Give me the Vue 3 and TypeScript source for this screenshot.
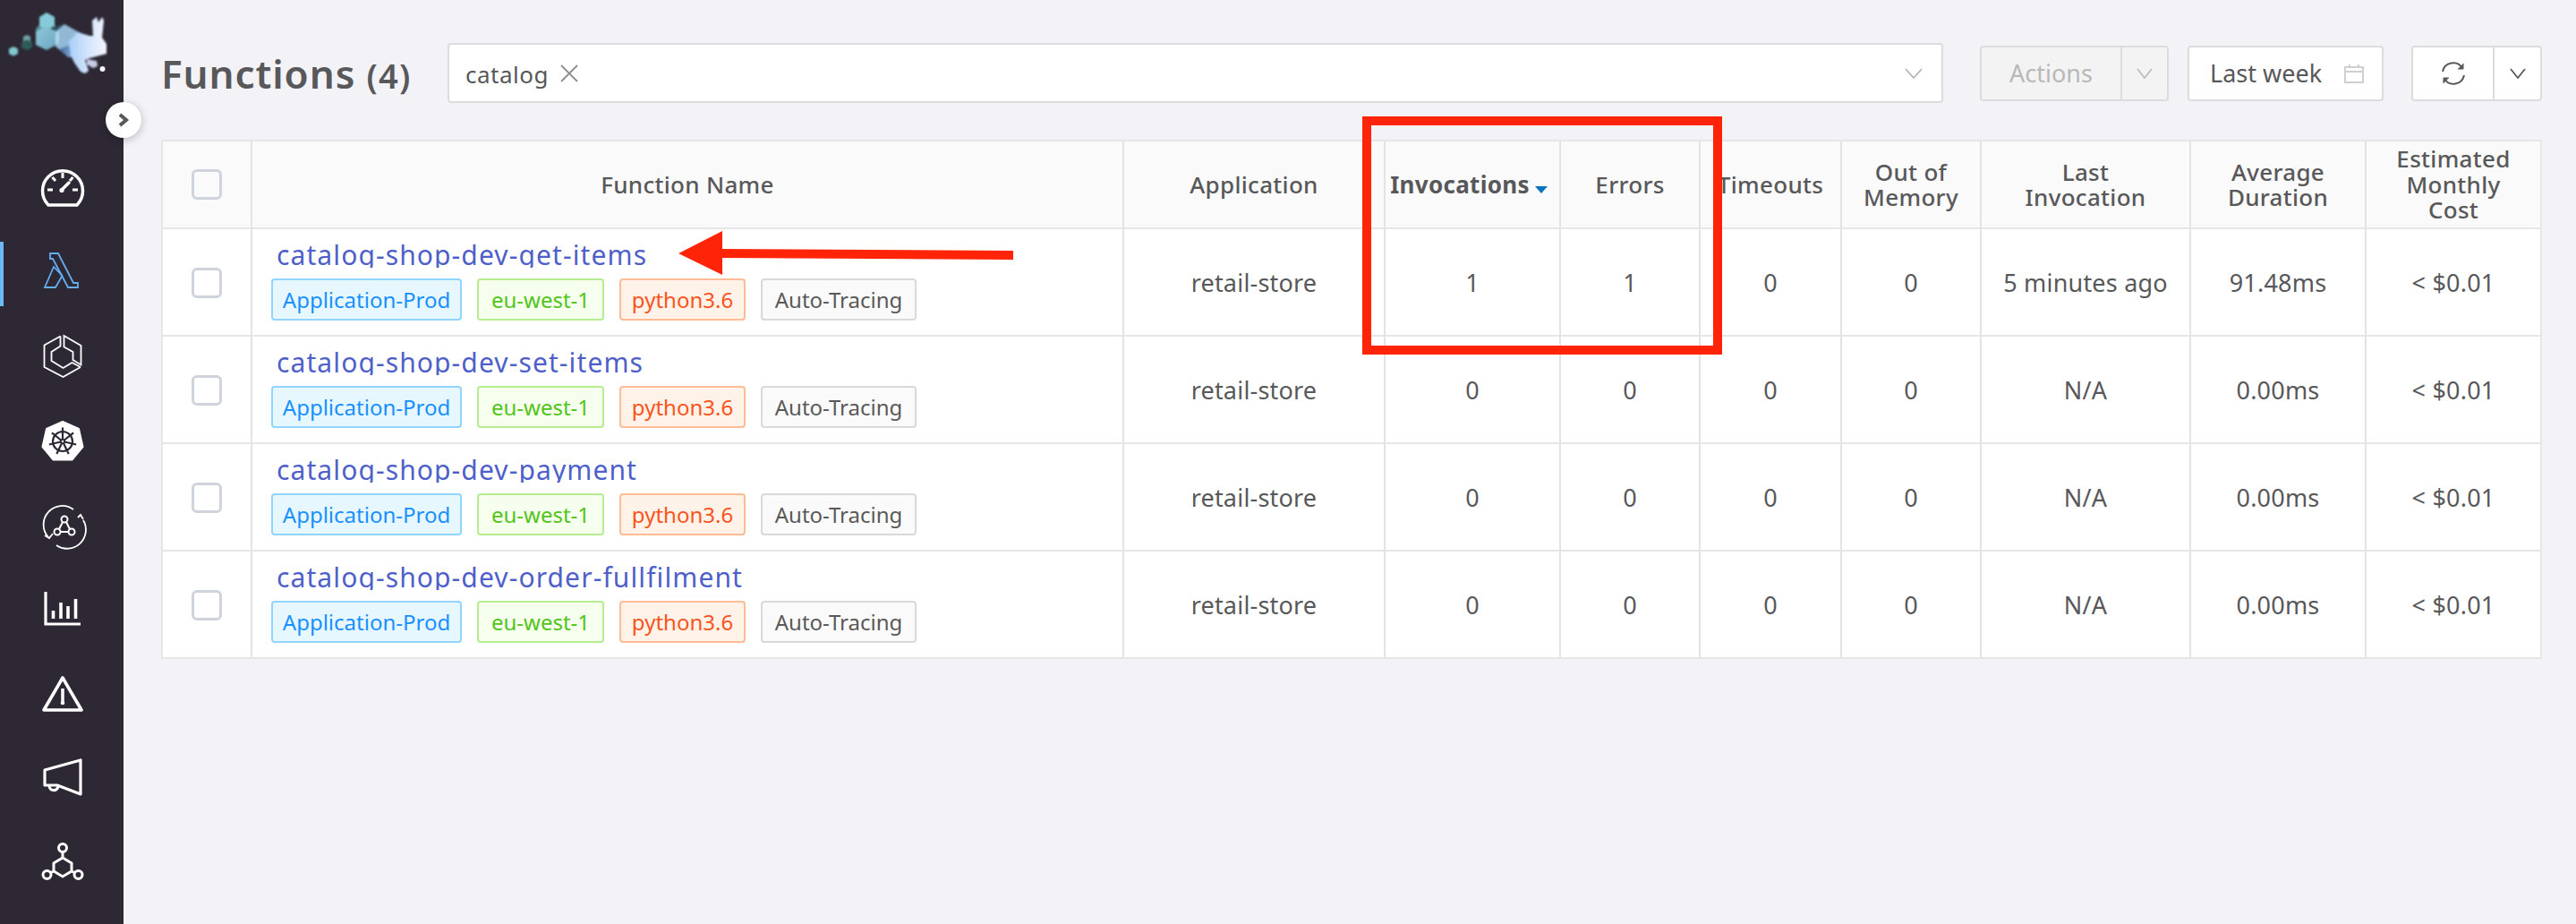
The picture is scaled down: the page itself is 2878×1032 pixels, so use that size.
<script setup lang="ts">
interface FunctionRow {
  name: string;
  invocations: number;
  errors: number;
  last: string;
  duration: string;
}

const columns: { lines: string[]; sorted?: boolean }[] = [
  { lines: ["Function Name"] },
  { lines: ["Application"] },
  { lines: ["Invocations"], sorted: true },
  { lines: ["Errors"] },
  { lines: ["Timeouts"] },
  { lines: ["Out of", "Memory"] },
  { lines: ["Last", "Invocation"] },
  { lines: ["Average", "Duration"] },
  { lines: ["Estimated", "Monthly", "Cost"] },
];

const rows: FunctionRow[] = [
  { name: "catalog-shop-dev-get-items", invocations: 1, errors: 1, last: "5 minutes ago", duration: "91.48ms" },
  { name: "catalog-shop-dev-set-items", invocations: 0, errors: 0, last: "N/A", duration: "0.00ms" },
  { name: "catalog-shop-dev-payment", invocations: 0, errors: 0, last: "N/A", duration: "0.00ms" },
  { name: "catalog-shop-dev-order-fullfilment", invocations: 0, errors: 0, last: "N/A", duration: "0.00ms" },
];

const tags = [
  { label: "Application-Prod", kind: "blue", width: 213 },
  { label: "eu-west-1", kind: "green", width: 142 },
  { label: "python3.6", kind: "orange", width: 141 },
  { label: "Auto-Tracing", kind: "grey", width: 174 },
];

const colWidths = [100, 974, 292, 196, 156, 158, 156, 234, 196, 194];
</script>

<template>
  <div class="page">
    <aside class="sidebar">
      <div class="logo">
        <svg width="138" height="100" viewBox="0 0 138 100">
          <defs>
            <linearGradient id="bunny" x1="0" x2="1" y1="0" y2="0">
              <stop offset="0" stop-color="#a9cff8" />
              <stop offset="0.5" stop-color="#d3e4fd" />
              <stop offset="1" stop-color="#f3f6ff" />
            </linearGradient>
            <linearGradient id="mid" x1="0" x2="1" y1="0" y2="1">
              <stop offset="0" stop-color="#8fcbdc" />
              <stop offset="1" stop-color="#6ba3bd" />
            </linearGradient>
            <linearGradient id="low" x1="0" x2="1" y1="0" y2="0">
              <stop offset="0" stop-color="#3f6897" />
              <stop offset="1" stop-color="#8fb4e0" />
            </linearGradient>
            <filter id="soft"><feGaussianBlur stdDeviation="0.8" /></filter>
          </defs>
          <g filter="url(#soft)">
            <polygon points="15,52 20,54.500 20,60 15,62.500 10,60 10,54.500" fill="#7fc9cf" />
            <polygon points="30,39 34,41 34,46 30,48 26,46 26,41" fill="#6fa6a8" />
            <polygon points="30,44 36,47 36,53 30,56.500 24,53 24,47" fill="#2d5a58" />
            <polygon points="45,27 52,27 52,40 40,40 40,32" fill="#5d929c" />
            <polygon points="60,29 70,28 70,42 60,42" fill="#2b5160" />
            <polygon points="72,27 90,37 90,52 72,60 62,52 62,36" fill="#91b9d6" />
            <polygon points="66,55 78,50 84,52 84,64 76,64" fill="url(#low)" />
            <polygon points="52,14 61,19 61,29 52,34 44,29 44,19" fill="#85cbdc" />
            <polygon points="51,29 65,36 65,49 52,56 40,50 40,36" fill="url(#mid)" />
            <polygon points="62,36 66,34 66,48 62,50" fill="#a8d8ef" />
            <path
              d="M103 23 L108 19 L110 25 L114 19 L116 23 L114 42 L119 49 L119 60 L100 65 L95 67 L99 79 L95 82 L90 80 L83 70 L79 62 L77 46 L87 36 L100 40 L104 40 Z"
              fill="url(#bunny)"
            />
            <polygon points="97,66 108,68 109,74 104,76 97,72" fill="#c6cbe6" />
          </g>
          <circle cx="114.500" cy="77" r="3" fill="#f2f5ff" />
        </svg>
      </div>

      <nav class="nav">
        <a class="nav-item">
          <svg width="138" height="94" viewBox="0 163 138 94" fill="none" stroke="#fff" stroke-width="3.500">
            <path d="M54 229 A22.500 22.500 0 1 1 86 229 Z" stroke-linejoin="round" />
            <path d="M70 193 V199 M58.500 198 L62 202 M81.500 198 L78 202 M53 212 H59 M81 212 H87" stroke-width="3" />
            <path d="M69 212 L77 204" stroke-width="3.500" stroke-linecap="round" />
            <circle cx="69" cy="212.500" r="2.600" fill="#fff" stroke="none" />
          </svg>
        </a>
        <a class="nav-item nav-item--active">
          <svg width="138" height="94" viewBox="0 257 138 94" fill="none" stroke="#63aef0" stroke-width="1.800">
            <path d="M56 283 H65 L82 316 H87 V321 H76 L59 289 H56 Z" />
            <path d="M60 298 L50 321 H62 L69.500 308 Z" />
          </svg>
        </a>
        <a class="nav-item">
          <svg width="138" height="94" viewBox="0 351 138 94" fill="none" stroke="#fff" stroke-width="1.800">
            <path d="M67.500 375.500 L49.500 385.500 V410 L70.500 421 L90 410" />
            <path d="M67.500 375.500 V386.500 L57.500 393 V403 L70.500 411 L80.500 405 L90 410" />
            <path d="M71.500 375 L90.500 386 V407.500 L81.500 402 V393 L71.500 387.500 Z" />
          </svg>
        </a>
        <a class="nav-item">
          <svg width="138" height="94" viewBox="0 445 138 94" fill="none">
            <polygon
              points="70,471 88,479 92.500,499 80.500,513.500 59.500,513.500 47.500,499 52,479"
              fill="#fff"
              stroke="#fff"
              stroke-linejoin="round"
              stroke-width="2"
            />
            <g stroke="#2d2834" stroke-width="2.200">
              <circle cx="70" cy="493" r="11" />
              <path d="M70 493 V477.500 M70 493 L82.100 483.300 M70 493 L85.100 496.500 M70 493 L76.700 507 M70 493 L63.300 507 M70 493 L54.900 496.500 M70 493 L57.900 483.300" />
            </g>
            <circle cx="70" cy="493" r="3" fill="#2d2834" />
            <circle cx="70" cy="493" r="1.200" fill="#fff" />
          </svg>
        </a>
        <a class="nav-item">
          <svg width="138" height="94" viewBox="0 539 138 94" fill="none" stroke="#fff" stroke-width="1.800">
            <path d="M82 569 A21 21 0 0 0 54 600" />
            <path d="M93 581 A21 21 0 0 1 63 609" />
            <path d="M50 598 L55 601 L59 596 M87 578 L90 575 L93 580" />
            <g stroke-width="2">
              <circle cx="72" cy="580" r="3.500" />
              <circle cx="64" cy="594" r="3.500" />
              <circle cx="80" cy="594" r="3.500" />
              <path d="M70 583 L66 591 M74 583 L78 591 M67.500 594 H76.500" />
            </g>
          </svg>
        </a>
        <a class="nav-item">
          <svg width="138" height="94" viewBox="0 633 138 94" fill="none" stroke="#fff">
            <path d="M51 661 V697 H90" stroke-width="3.200" />
            <path d="M59.500 682 V691 M68 673 V691 M76 677 V691 M84.500 669 V691" stroke-width="3.600" />
          </svg>
        </a>
        <a class="nav-item">
          <svg width="138" height="94" viewBox="0 727 138 94" fill="none" stroke="#fff">
            <path d="M70 757 L91 793 H49 Z" stroke-width="3.600" stroke-linejoin="round" />
            <path d="M70 769 V783" stroke-width="3.500" />
            <circle cx="70" cy="785" r="2.300" fill="#fff" stroke="none" />
          </svg>
        </a>
        <a class="nav-item">
          <svg width="138" height="94" viewBox="0 821 138 94" fill="none" stroke="#fff" stroke-width="3.200">
            <path d="M50 860 L90 849 V887 L64 877 H50 Z" stroke-linejoin="round" />
            <path d="M55 877 A5 5 0 0 0 65 878" />
          </svg>
        </a>
        <a class="nav-item">
          <svg width="138" height="94" viewBox="0 915 138 94" fill="none" stroke="#fff" stroke-width="3">
            <circle cx="70" cy="947" r="4.500" />
            <circle cx="52.500" cy="977" r="4.500" />
            <circle cx="87.500" cy="977" r="4.500" />
            <path d="M70 952 V958 M70 958 L80 964 V973 L70 979 L60 973 V964 Z M60 973 L56 975 M80 973 L84 975" stroke-linejoin="round" />
          </svg>
        </a>
      </nav>
    </aside>

    <button class="collapse" type="button">
      <svg width="14" height="18" viewBox="0 0 14 18" fill="none" stroke="#58585b" stroke-width="4">
        <path d="M3 3 L10 9 L3 15" />
      </svg>
    </button>

    <main class="content">
      <header class="toolbar">
        <h1 class="title">Functions <span class="count">(4)</span></h1>

        <div class="search">
          <span class="chip">catalog</span>
          <svg class="chip-x" width="22" height="22" viewBox="0 0 22 22" stroke="#8e8e8e" stroke-width="1.800">
            <path d="M2 2 L20 20 M20 2 L2 20" />
          </svg>
          <svg class="chev search-chev" width="22" height="14" viewBox="0 0 22 14" fill="none" stroke="#b5b5b5" stroke-width="1.800">
            <path d="M2 2 L11 12 L20 2" />
          </svg>
        </div>

        <div class="btn-group btn-group--disabled">
          <span class="btn-main actions-main">Actions</span>
          <span class="btn-side">
            <svg width="18" height="12" viewBox="0 0 18 12" fill="none" stroke="#bcbcbc" stroke-width="1.800">
              <path d="M1 1 L9 11 L17 1" />
            </svg>
          </span>
        </div>

        <div class="btn-group date">
          <span class="date-text">Last week</span>
          <svg width="22" height="22" viewBox="0 0 22 22" fill="none" stroke="#cfcfcf" stroke-width="2">
            <path d="M1 4 H21 V21 H1 Z M1 9 H21 M6 1 V5 M16 1 V5" />
          </svg>
        </div>

        <div class="btn-group refresh">
          <span class="btn-main refresh-main">
            <svg width="28" height="28" viewBox="0 0 28 28" fill="none" stroke="#58585b" stroke-width="2">
              <path d="M2 12 A12 12 0 0 1 24 8 M26 16 A12 12 0 0 1 4 20" />
              <path d="M25 3 V9 H19 M3 25 V19 H9" fill="#58585b" stroke-width="1" />
            </svg>
          </span>
          <span class="btn-side refresh-side">
            <svg width="18" height="12" viewBox="0 0 18 12" fill="none" stroke="#58585b" stroke-width="1.800">
              <path d="M1 1 L9 11 L17 1" />
            </svg>
          </span>
        </div>
      </header>

      <table class="grid">
        <colgroup>
          <col v-for="(w, i) in colWidths" :key="i" :style="{ width: w + 'px' }" />
        </colgroup>
        <thead>
          <tr>
            <th><span class="check"></span></th>
            <th v-for="col in columns" :key="col.lines[0]" :class="{ sorted: col.sorted }">
              <span v-for="line in col.lines" :key="line" class="th-line">
                {{ line }}<i v-if="col.sorted" class="caret"></i>
              </span>
            </th>
          </tr>
        </thead>
        <tbody>
          <tr v-for="row in rows" :key="row.name">
            <td><span class="check check--row"></span></td>
            <td class="name-cell">
              <a class="fn-link">{{ row.name }}</a>
              <div class="tags">
                <span
                  v-for="tag in tags"
                  :key="tag.label"
                  class="tag"
                  :class="`tag--${tag.kind}`"
                  :style="{ width: tag.width + 'px' }"
                >{{ tag.label }}</span>
              </div>
            </td>
            <td>retail-store</td>
            <td>{{ row.invocations }}</td>
            <td>{{ row.errors }}</td>
            <td>0</td>
            <td>0</td>
            <td>{{ row.last }}</td>
            <td>{{ row.duration }}</td>
            <td>&lt; $0.01</td>
          </tr>
        </tbody>
      </table>
    </main>

    <!-- screenshot annotations drawn on top of the table -->
    <div class="note-box"></div>
    <svg class="note-arrow" width="380" height="54" viewBox="756 256 380 54">
      <polygon points="758,283 807,258 807,278 1132,280 1132,290 807,288 807,307" fill="#ff2408" />
    </svg>
  </div>
</template>

<style>
html,
body {
  margin: 0;
  background: #f3f2f7;
}
</style>

<style scoped>
.page {
  position: relative;
  display: flex;
  height: 1032px;
  overflow: hidden;
  font-family: "Noto Sans", "Open Sans", sans-serif;
  color: #58585b;
  background: #f3f2f7;
}

.sidebar {
  flex: 0 0 138px;
  background: #2d2834;
  display: flex;
  flex-direction: column;
}

.logo {
  height: 163px;
}

.logo svg {
  display: block;
}

.nav-item {
  position: relative;
  display: block;
  height: 94px;
}

.nav-item svg {
  display: block;
}

.nav-item--active::before {
  content: "";
  position: absolute;
  left: 0;
  top: 13px;
  width: 4px;
  height: 72px;
  background: #6cb8f6;
}

.collapse {
  position: absolute;
  left: 118px;
  top: 114px;
  width: 40px;
  height: 40px;
  padding: 0;
  border: none;
  border-radius: 50%;
  background: #fff;
  box-shadow: 0 2px 10px rgba(0, 0, 0, 0.25);
  display: flex;
  align-items: center;
  justify-content: center;
}

.content {
  flex: 1;
  min-width: 0;
  padding: 48px 38px 0 42px;
}

.toolbar {
  display: flex;
  align-items: center;
  height: 67px;
  margin-bottom: 41px;
}

.title {
  flex: 0 0 320px;
  margin: 0;
  padding-top: 3px;
  font-size: 44px;
  font-weight: 600;
  line-height: 60px;
  letter-spacing: 0.9px;
}

.count {
  font-size: 38px;
  letter-spacing: 1.2px;
}

.search {
  flex: 1;
  height: 67px;
  box-sizing: border-box;
  display: flex;
  align-items: center;
  padding: 0 20px 0 18px;
  background: #fff;
  border: 2px solid #dcdcdc;
  border-radius: 4px;
}

.chip {
  font-size: 26px;
  letter-spacing: 0.5px;
  margin-right: 12px;
  padding-top: 2px;
}

.search-chev {
  margin-left: auto;
}

.btn-group {
  display: flex;
  flex: none;
  height: 62px;
  box-sizing: border-box;
  border: 2px solid #dcdcdc;
  border-radius: 4px;
  background: #fff;
  font-size: 27px;
}

.btn-group--disabled {
  width: 211px;
  margin-left: 41px;
  background: #f3f3f3;
  color: #b8b8b8;
}

.btn-main {
  display: flex;
  align-items: center;
  justify-content: center;
}

.actions-main {
  width: 155px;
}

.btn-side {
  flex: 1;
  display: flex;
  align-items: center;
  justify-content: center;
  border-left: 2px solid #dcdcdc;
}

.date {
  width: 219px;
  margin-left: 21px;
  padding: 0 20px 0 23px;
  align-items: center;
  justify-content: space-between;
}

.refresh {
  width: 146px;
  margin-left: 31px;
}

.refresh-main {
  width: 89px;
}

.grid {
  width: 2660px;
  table-layout: fixed;
  border-collapse: separate;
  border-spacing: 0;
  background: #fff;
  border: 2px solid #e6e6e6;
  border-bottom: none;
}

.grid th,
.grid td {
  padding: 0;
  box-sizing: border-box;
  text-align: center;
  border-right: 2px solid #e3e3e3;
  border-bottom: 2px solid #e6e6e6;
  font-size: 27px;
  letter-spacing: 0.2px;
  color: #58585b;
  white-space: nowrap;
}

.grid th:last-child,
.grid td:last-child {
  border-right: none;
}

.grid th {
  height: 98px;
  background: #fafafa;
  font-size: 26px;
  font-weight: 500;
  line-height: 28.500px;
  letter-spacing: 0.3px;
}

.grid td {
  height: 120px;
}

.th-line {
  display: block;
}

.grid th.sorted {
  font-weight: 700;
  padding-right: 8px;
}

.caret {
  display: inline-block;
  margin-left: 6px;
  border-left: 7px solid transparent;
  border-right: 7px solid transparent;
  border-top: 8px solid #0b72c0;
  vertical-align: 0;
}

.check {
  display: block;
  margin: 0 auto;
  width: 34px;
  height: 34px;
  box-sizing: border-box;
  border: 3px solid #cfd3dc;
  border-radius: 6px;
}

.check--row {
  margin-top: 2px;
}

.grid td.name-cell {
  text-align: left;
  padding: 12px 0 0 21px;
  vertical-align: top;
}

.fn-link {
  display: block;
  height: 31px;
  overflow: hidden;
  margin: 0 0 12px 6px;
  font-size: 30px;
  line-height: 34px;
  letter-spacing: 1.1px;
  color: #4f5fc9;
}

.tags {
  display: flex;
  gap: 17px;
}

.tag {
  height: 47px;
  box-sizing: border-box;
  display: flex;
  align-items: center;
  justify-content: center;
  font-size: 24px;
  letter-spacing: 0;
  border: 2px solid;
  border-radius: 4px;
}

.tag--blue {
  color: #1890ff;
  background: #e6f7ff;
  border-color: #91d5ff;
}

.tag--green {
  color: #52c41a;
  background: #f6ffed;
  border-color: #b7eb8f;
}

.tag--orange {
  color: #fa541c;
  background: #fff2e8;
  border-color: #ffbb96;
}

.tag--grey {
  color: #595959;
  background: #fafafa;
  border-color: #d9d9d9;
}

.note-box {
  position: absolute;
  left: 1522px;
  top: 130px;
  width: 402px;
  height: 266px;
  box-sizing: border-box;
  border: 10px solid #ff2408;
}

.note-arrow {
  position: absolute;
  left: 756px;
  top: 256px;
}
</style>
